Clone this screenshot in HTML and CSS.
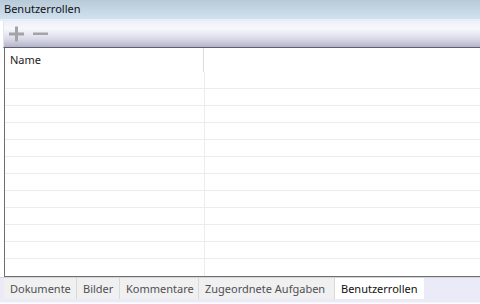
FILE: index.html
```html
<html>
<head>
	<meta http-equiv="Content-Type" content="text/html; charset=UTF-8">
	<link rel="stylesheet" href="styles.css">
</head>
<body>
	<div class="titel">Benutzerrollen</div>
	<div class="trenner"></div>
	<div class="werkzeug">
		<svg class="werkzeug_btn" width="16" height="16" viewBox="0 0 16 16">
			<rect x="0" y="6.5" width="15" height="3" fill="#a3a3a8"/>
			<rect x="6" y="0.5" width="3" height="15" fill="#a3a3a8"/>
		</svg>
		<svg class="werkzeug_btn" width="16" height="16" viewBox="0 0 16 16">
			<rect x="0" y="6.5" width="15" height="2.5" fill="#a3a3a8"/>
		</svg>
	</div>
	<div class="tabelle">
		<div class="kopf">
			<div class="kopf_zelle">Name</div>
			<div class="kopf_rest"></div>
		</div>
		<div class="zeilen">
			<div class="zeile"><div class="zelle"></div><div class="zelle_rest"></div></div>
			<div class="zeile"><div class="zelle"></div><div class="zelle_rest"></div></div>
			<div class="zeile"><div class="zelle"></div><div class="zelle_rest"></div></div>
			<div class="zeile"><div class="zelle"></div><div class="zelle_rest"></div></div>
			<div class="zeile"><div class="zelle"></div><div class="zelle_rest"></div></div>
			<div class="zeile"><div class="zelle"></div><div class="zelle_rest"></div></div>
			<div class="zeile"><div class="zelle"></div><div class="zelle_rest"></div></div>
			<div class="zeile"><div class="zelle"></div><div class="zelle_rest"></div></div>
			<div class="zeile"><div class="zelle"></div><div class="zelle_rest"></div></div>
			<div class="zeile"><div class="zelle"></div><div class="zelle_rest"></div></div>
			<div class="zeile"><div class="zelle"></div><div class="zelle_rest"></div></div>
			<div class="zeile zeile_letzte"><div class="zelle"></div><div class="zelle_rest"></div></div>
		</div>
	</div>
	<div class="reiter_leiste">
		<div class="reiter reiter_dok">Dokumente</div>
		<div class="reiter reiter_bil">Bilder</div>
		<div class="reiter reiter_kom">Kommentare</div>
		<div class="reiter reiter_auf">Zugeordnete Aufgaben</div>
		<div class="reiter reiter_aktiv">Benutzerrollen</div>
	</div>
</body>
</html>
```
FILE: styles.css
```css
body
{
	margin: 0;
	width: 480px;
	height: 304px;
	overflow: hidden;
	background-color: #ffffff;
	font-family: "Noto Sans", "Open Sans", sans-serif;
	font-size: 11px;
	color: #1b1b1b;
}
.titel
{
	height: 19px;
	line-height: 18px;
	padding-left: 4px;
	background: linear-gradient(#b8c9d8, #d0e1ef);
	color: #10131a;
}
.trenner
{
	height: 2px;
	background-color: #e8edf5;
}
.werkzeug
{
	margin-left: 3px;
	height: 26px;
	border-left: 1px solid #e4e4ec;
	border-bottom: 1px solid #5e5f68;
	background: linear-gradient(#eef0f7, #f7f8fc 30%, #d8d9e6 70%, #b3b3cb);
	display: flex;
	align-items: center;
	padding-left: 5px;
	gap: 8px;
}
.werkzeug_btn
{
	display: block;
}
.tabelle
{
	margin-left: 4px;
	border-left: 1px solid #6f6f72;
	border-bottom: 1px solid #6f6f72;
}
.kopf
{
	display: flex;
	height: 24px;
}
.kopf_zelle
{
	width: 193px;
	padding-left: 5px;
	line-height: 24px;
	border-right: 1px solid #dcdcdc;
}
.kopf_rest
{
	flex: 1;
}
.zeile
{
	display: flex;
	height: 16px;
	border-bottom: 1px solid #ececec;
}
.zeile_letzte
{
	border-bottom: none;
	height: 17px;
}
.zelle
{
	width: 199px;
	border-right: 1px solid #ececec;
}
.zelle_rest
{
	flex: 1;
}
.reiter_leiste
{
	border-top: 1px solid #d4d4d8;
	height: 24px;
	background-color: #eaeaf8;
	border-bottom: 1px solid #f4f4fb;
	display: flex;
	padding-left: 4px;
	align-items: flex-start;
}
.reiter
{
	box-sizing: border-box;
	height: 21px;
	line-height: 21px;
	padding-left: 6px;
	background-color: #f0f0f0;
	border-right: 1px solid #d9d9d9;
	color: #4f4f55;
	white-space: nowrap;
	overflow: hidden;
}
.reiter_dok
{
	width: 73px;
}
.reiter_bil
{
	width: 43px;
}
.reiter_kom
{
	width: 79px;
}
.reiter_auf
{
	width: 136px;
}
.reiter_aktiv
{
	width: 89px;
	background-color: #ffffff;
	color: #101010;
	border-right: none;
}
```
